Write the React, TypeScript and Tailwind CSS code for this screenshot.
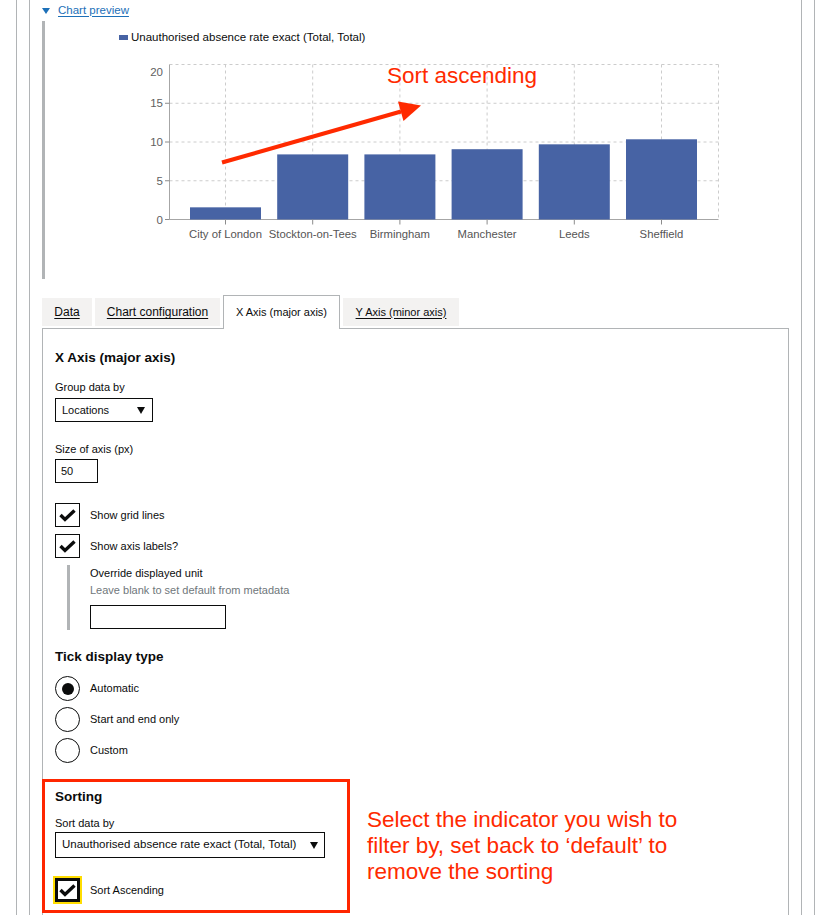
import React from 'react';

const bars = [
  { label: 'City of London', value: 1.57 },
  { label: 'Stockton-on-Tees', value: 8.4 },
  { label: 'Birmingham', value: 8.4 },
  { label: 'Manchester', value: 9.07 },
  { label: 'Leeds', value: 9.7 },
  { label: 'Sheffield', value: 10.35 },
];

const Chart: React.FC = () => {
  // drawn in page coordinates via the viewBox offset
  const y0 = 219.5;
  const unit = 7.75;
  const left = 169.5;
  const right = 718.5;
  const top = 64.5;
  const centerOf = (i: number) => 225.5 + 87.2 * i;

  return (
    <svg width={744} height={258} viewBox="45 21 744 258" className="block">
      {/* legend */}
      <rect x={119} y={35} width={9} height={5} fill="#4763a4" />
      <text x={131} y={41} fontSize={11.5} fill="#0b0c0c">
        Unauthorised absence rate exact (Total, Total)
      </text>

      {/* grid */}
      {[5, 10, 15, 20].map((v) => (
        <line key={v} x1={left} x2={right} y1={y0 - v * unit} y2={y0 - v * unit} stroke="#cccccc" strokeDasharray="3 3" />
      ))}
      {bars.map((b, i) => (
        <line key={b.label} x1={centerOf(i)} x2={centerOf(i)} y1={top} y2={y0} stroke="#cccccc" strokeDasharray="3 3" />
      ))}
      <line x1={right} x2={right} y1={top} y2={y0} stroke="#cccccc" strokeDasharray="3 3" />

      {/* axes */}
      <line x1={left} x2={left} y1={top} y2={y0} stroke="#a6a6a6" />
      <line x1={left} x2={right} y1={y0} y2={y0} stroke="#a6a6a6" />

      {[0, 5, 10, 15].map((v) => (
        <g key={v}>
          <line x1={165} x2={left} y1={y0 - v * unit} y2={y0 - v * unit} stroke="#8c8c8c" />
          <text x={163} y={y0 - v * unit + 4} fontSize={11.5} fill="#5f5f5f" textAnchor="end">
            {v}
          </text>
        </g>
      ))}
      <text x={163} y={76} fontSize={11.5} fill="#5f5f5f" textAnchor="end">
        20
      </text>

      {/* bars */}
      {bars.map((b, i) => (
        <g key={b.label}>
          <rect x={centerOf(i) - 35.5} y={y0 - b.value * unit} width={71} height={b.value * unit} fill="#4763a4" />
          <line x1={centerOf(i)} x2={centerOf(i)} y1={y0} y2={y0 + 5} stroke="#8c8c8c" />
          <text x={centerOf(i)} y={238} fontSize={11.3} fill="#555555" textAnchor="middle">
            {b.label}
          </text>
        </g>
      ))}

      {/* annotation */}
      <text x={387} y={83} fontSize={22.5} fill="#ff2a00">
        Sort ascending
      </text>
      <line x1={222} y1={162.5} x2={401} y2={111.5} stroke="#ff2a00" strokeWidth={4} />
      <polygon points="421,105.5 403.5,121 398,101.5" fill="#ff2a00" />
    </svg>
  );
};

const Caret: React.FC = () => (
  <svg width="8" height="7" viewBox="0 0 8 7" className="block">
    <polygon points="0,0 8,0 4,7" fill="#0b0c0c" />
  </svg>
);

const Tick: React.FC = () => (
  <svg width="17" height="13" viewBox="0 0 17 13" className="block">
    <path d="M1.5 6 L6 10.5 L15.5 1.5" fill="none" stroke="#0b0c0c" strokeWidth="3.4" />
  </svg>
);

const Checkbox: React.FC<{ label: string; className?: string }> = ({ label, className }) => (
  <div className={`flex items-center ${className ?? ''}`}>
    <div className="flex h-[24px] w-[25px] items-center justify-center border-[1.5px] border-[#0b0c0c] bg-white">
      <Tick />
    </div>
    <span className="ml-[10px] text-[11px] leading-4">{label}</span>
  </div>
);

const Radio: React.FC<{ label: string; checked?: boolean }> = ({ label, checked }) => (
  <div className="flex items-center">
    <div className="flex h-[25px] w-[25px] items-center justify-center rounded-full border-[1.5px] border-[#0b0c0c]">
      {checked && <div className="h-[12px] w-[12px] rounded-full bg-[#0b0c0c]" />}
    </div>
    <span className="ml-[10px] -mt-[1px] text-[11px] leading-4">{label}</span>
  </div>
);

const App: React.FC = () => {
  return (
    <div className="min-h-screen bg-white font-['Liberation_Sans',Arial,sans-serif] text-[#0b0c0c]">
      <div className="ml-4 min-h-[915px] w-[799px] border-x border-[#b1b4b6] px-3">
        <div className="min-h-[915px] border-x border-[#b1b4b6] px-3">
          {/* Chart preview details */}
          <div className="flex h-[21px] items-center gap-2">
            <svg width="8" height="6" viewBox="0 0 8 6" className="block">
              <polygon points="0,0 8,0 4,6" fill="#1d70b8" />
            </svg>
            <span className="text-[11.5px] text-[#1d70b8] underline underline-offset-2">Chart preview</span>
          </div>
          <div className="h-[258px] border-l-[3px] border-[#b1b4b6]">
            <Chart />
          </div>

          {/* Tabs */}
          <div className="mt-4 flex h-[33px] items-start gap-[3px] text-[12px]">
            <div className="mt-[3px] flex h-[28px] w-[50px] items-center justify-center bg-[#f3f2f1] underline underline-offset-2">
              Data
            </div>
            <div className="mt-[3px] flex h-[28px] w-[125px] items-center justify-center bg-[#f3f2f1] underline underline-offset-2">
              Chart configuration
            </div>
            <div className="relative z-10 flex h-[34px] w-[117px] items-center justify-center border border-b-0 border-[#b1b4b6] bg-white text-[11px]">
              X Axis (major axis)
            </div>
            <div className="mt-[3px] flex h-[28px] w-[116px] items-center justify-center bg-[#f3f2f1] text-[11px] underline underline-offset-2">
              Y Axis (minor axis)
            </div>
          </div>

          {/* Panel */}
          <div className="min-h-[600px] border-x border-t border-[#b1b4b6] pl-3 pr-3 pt-5">
            <h2 className="text-[13.5px] font-bold leading-[18px]">X Axis (major axis)</h2>

            <div className="mt-3 text-[11px] leading-4">Group data by</div>
            <div className="mt-[3px] flex h-[24px] w-[98px] items-center justify-between border border-[#0b0c0c] pl-[6px] pr-[7px] text-[11px]">
              <span>Locations</span>
              <Caret />
            </div>

            <div className="mt-[19px] text-[11px] leading-4">Size of axis (px)</div>
            <div className="mt-[2px] flex h-[24px] w-[43px] items-center border border-[#0b0c0c] pl-[5px] text-[11px]">
              50
            </div>

            <Checkbox label="Show grid lines" className="mt-5" />
            <Checkbox label="Show axis labels?" className="mt-[7px]" />

            <div className="ml-3 mt-[7px] flex">
              <div className="w-[3px] bg-[#b1b4b6]" />
              <div className="pl-5">
                <div className="text-[11px] leading-4">Override displayed unit</div>
                <div className="mt-[1px] text-[11px] leading-4 text-[#6f777b]">Leave blank to set default from metadata</div>
                <div className="mt-[7px] h-[24px] w-[136px] border border-[#0b0c0c]" />
                <div className="h-[1px]" />
              </div>
            </div>

            <h3 className="mt-[18px] text-[13.5px] font-bold leading-[18px]">Tick display type</h3>
            <div className="mt-[10px] flex flex-col gap-[6px]">
              <Radio label="Automatic" checked />
              <Radio label="Start and end only" />
              <Radio label="Custom" />
            </div>

            {/* Sorting, outlined in red */}
            <div className="-ml-[13px] mt-4 flex items-start">
              <div className="h-[134px] w-[308px] border-[3px] border-[#ff2600] pl-[10px] pt-[6px]">
                <h3 className="text-[13.5px] font-bold leading-[18px]">Sorting</h3>
                <div className="mt-[9px] text-[11px] leading-4">Sort data by</div>
                <div className="mt-[1px] flex h-[26px] w-[270px] items-center justify-between border border-[#0b0c0c] pl-[6px] pr-[6px] text-[11.5px]">
                  <span>Unauthorised absence rate exact (Total, Total)</span>
                  <Caret />
                </div>
                <div className="mt-5 flex items-center">
                  <div className="flex h-[24px] w-[25px] items-center justify-center border-[3px] border-[#0b0c0c] bg-white shadow-[0_0_0_2px_#ffdd00]">
                    <Tick />
                  </div>
                  <span className="ml-[10px] text-[11px] leading-4">Sort Ascending</span>
                </div>
              </div>
              <p className="ml-[17px] mt-7 text-[22.5px] leading-[26px] text-[#ff2a00]">
                Select the indicator you wish to
                <br />
                filter by, set back to ‘default’ to
                <br />
                remove the sorting
              </p>
            </div>
          </div>
        </div>
      </div>
    </div>
  );
};

export default App;
